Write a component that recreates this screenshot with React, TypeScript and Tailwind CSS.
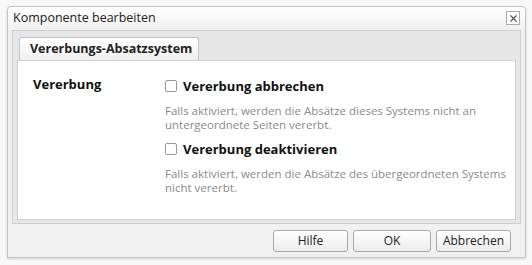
import { X } from "lucide-react";

function Option({ label, desc }: { label: string; desc: string }) {
  return (
    <div className="flex flex-col">
      <label className="flex items-center gap-[6px] text-[13px] font-bold text-[#111] leading-[18px]">
        <span className="w-[12px] h-[12px] rounded-[2px] border border-[#999] bg-white" />
        {label}
      </label>
      <p className="mt-[9px] text-[11.5px] leading-[14px] text-[#8a8a8a] w-[345px]">{desc}</p>
    </div>
  );
}

function Btn({ children, w }: { children: string; w: string }) {
  return (
    <button className={`${w} h-[22px] rounded-[3px] border border-[#a8a8a8] bg-gradient-to-b from-white to-[#ececec] text-[12px] text-[#222]`}>
      {children}
    </button>
  );
}

export default function App() {
  return (
    <div className="w-[532px] h-[265px] bg-[#f8f8f8] pt-[6px] pl-[7px]" style={{ fontFamily: '"Open Sans", sans-serif' }}>
      <div className="w-[519px] h-[252px] rounded-t-[4px] border border-[#c4c4c4] bg-[#f0f0f0] shadow-[0_1px_3px_rgba(0,0,0,0.15)] flex flex-col">
        <div className="h-[22px] flex items-center justify-between pl-[5px] pr-[5px] bg-gradient-to-b from-white to-[#f0f0f0] rounded-t-[4px]">
          <span className="text-[12.5px] text-[#222]">Komponente bearbeiten</span>
          <span className="w-[14px] h-[14px] border border-[#aaa] bg-white flex items-center justify-center">
            <X size={11} strokeWidth={2.5} className="text-[#555]" />
          </span>
        </div>
        <div className="mx-[4px] mt-[1px] border border-[#cfcfcf] bg-[#e6e6e6] flex flex-col">
          <div className="h-[29px] flex items-end pl-[6px]">
            <div className="w-[180px] h-[23px] border border-b-0 border-[#c4c4c4] rounded-t-[3px] bg-gradient-to-b from-white to-[#efefef] flex items-center pl-[10px] text-[12.5px] font-bold text-[#222]">
              Vererbungs-Absatzsystem
            </div>
          </div>
          <div className="mx-[4px] mb-[3px] h-[160px] bg-white border border-[#d0d0d0] flex pt-[14px] pl-[15px]">
            <div className="w-[132px] text-[13px] font-bold text-[#111] leading-[18px]">Vererbung</div>
            <div className="flex flex-col gap-[8px] pt-[2px]">
              <Option label="Vererbung abbrechen" desc="Falls aktiviert, werden die Absätze dieses Systems nicht an untergeordnete Seiten vererbt." />
              <Option label="Vererbung deaktivieren" desc="Falls aktiviert, werden die Absätze des übergeordneten Systems nicht vererbt." />
            </div>
          </div>
        </div>
        <div className="flex justify-end gap-[5px] pr-[14px] pt-[6px]">
          <Btn w="w-[75px]">Hilfe</Btn>
          <Btn w="w-[78px]">OK</Btn>
          <Btn w="w-[75px]">Abbrechen</Btn>
        </div>
      </div>
    </div>
  );
}
